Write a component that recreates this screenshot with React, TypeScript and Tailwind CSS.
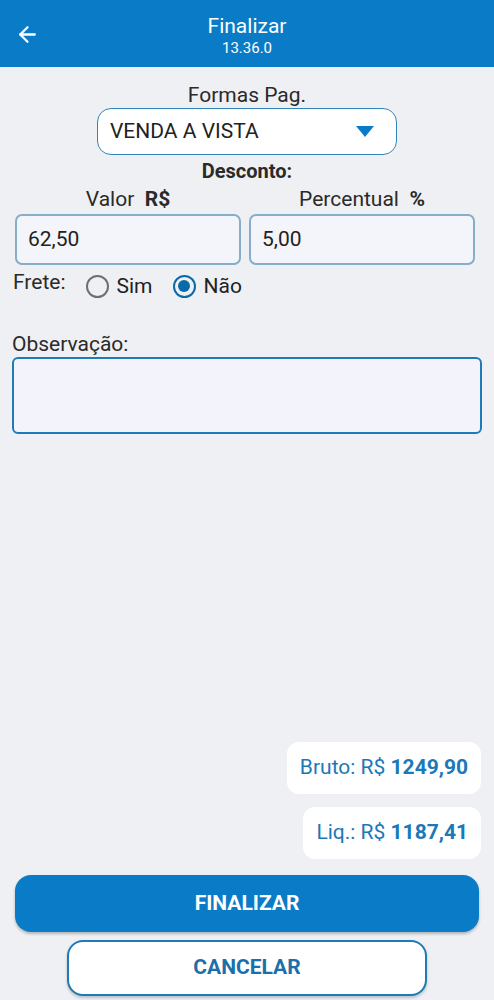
import { ArrowLeft } from "lucide-react"

export default function App() {
  return (
    <div className="flex h-[1000px] flex-col bg-[#eff0f4] font-['Roboto',sans-serif] text-[#222]">
      <header className="relative flex h-[67px] flex-col items-center bg-[#0a7bc6] pt-[13px] text-white">
        <ArrowLeft className="absolute left-[15px] top-[22px] h-[25px] w-[25px]" strokeWidth={2.2} />
        <div className="text-[21px] leading-[26px]">Finalizar</div>
        <div className="text-[15px] leading-[18px]">13.36.0</div>
      </header>

      <div className="flex flex-col items-center pt-[15px]">
        <div className="text-[21px] leading-[26px] text-[#2a2a2a]">Formas Pag.</div>
        <div className="flex h-[47px] w-[300px] items-center justify-between rounded-[14px] border-[1.5px] border-[#2f86b8] bg-white pl-[12px] pr-[22px]">
          <span className="text-[21px] text-[#222]">VENDA A VISTA</span>
          <svg width="18" height="11" viewBox="0 0 18 11">
            <path d="M0 0 L18 0 L9 11 Z" fill="#0a7bc6" />
          </svg>
        </div>
        <div className="mt-[4px] text-[20px] font-bold leading-[24px] text-[#2a2a2a]">Desconto:</div>
      </div>

      <div className="mt-[3px] grid grid-cols-2 gap-[8px] pl-[15px] pr-[19px]">
        <div className="flex flex-col">
          <div className="text-center text-[21px] leading-[26px] text-[#2a2a2a]">
            Valor&nbsp; <span className="font-bold">R$</span>
          </div>
          <div className="mt-[2px] flex h-[51px] items-center rounded-[7px] border-2 border-[#86aec6] bg-[#f4f5fa] px-[11px] text-[21px] text-[#222]">
            62,50
          </div>
        </div>
        <div className="flex flex-col">
          <div className="text-center text-[21px] leading-[26px] text-[#2a2a2a]">
            Percentual&nbsp; <span className="font-bold">%</span>
          </div>
          <div className="mt-[2px] flex h-[51px] items-center rounded-[7px] border-2 border-[#86aec6] bg-[#f4f5fa] px-[11px] text-[21px] text-[#222]">
            5,00
          </div>
        </div>
      </div>

      <div className="flex items-start px-[13px] pt-[4px]">
        <span className="text-[21px] leading-[26px] text-[#2a2a2a]">Frete:</span>
        <div className="ml-[20px] mt-[4px] flex items-center">
          <span className="h-[23px] w-[23px] rounded-full border-2 border-[#6f6f6f]" />
          <span className="ml-[8px] text-[21px] leading-[26px] text-[#222]">Sim</span>
        </div>
        <div className="ml-[20px] mt-[4px] flex items-center">
          <span className="flex h-[23px] w-[23px] items-center justify-center rounded-full border-2 border-[#0a6aa8]">
            <span className="h-[12px] w-[12px] rounded-full bg-[#0a6aa8]" />
          </span>
          <span className="ml-[8px] text-[21px] leading-[26px] text-[#222]">Não</span>
        </div>
      </div>

      <div className="px-[12px] pt-[32px]">
        <div className="text-[21px] leading-[26px] text-[#2a2a2a]">Observação:</div>
        <div className="h-[77px] rounded-[6px] border-2 border-[#1f7ab8] bg-[#f2f3fb]" />
      </div>

      <div className="flex-1" />

      <div className="flex flex-col items-end gap-[13px] px-[13px]">
        <div className="flex h-[52px] items-center rounded-[12px] bg-white px-[13px] text-[21px] text-[#1c78b6]">
          Bruto: R$&nbsp;<span className="font-bold">1249,90</span>
        </div>
        <div className="flex h-[52px] items-center rounded-[12px] bg-white px-[13px] text-[21px] text-[#1c78b6]">
          Liq.: R$&nbsp;<span className="font-bold">1187,41</span>
        </div>
      </div>

      <div className="flex flex-col items-center px-[15px] pb-[4px] pt-[16px]">
        <button className="flex h-[57px] w-full items-center justify-center rounded-[16px] bg-[#0a7bc6] text-[21px] font-bold text-white shadow-[0_2px_3px_rgba(0,0,0,0.25)]">
          FINALIZAR
        </button>
        <button className="mt-[8px] flex h-[56px] w-[360px] items-center justify-center rounded-[16px] border-2 border-[#1f7ab8] bg-white text-[21px] font-bold text-[#1c6fa8] shadow-[0_2px_3px_rgba(0,0,0,0.2)]">
          CANCELAR
        </button>
      </div>
    </div>
  )
}
